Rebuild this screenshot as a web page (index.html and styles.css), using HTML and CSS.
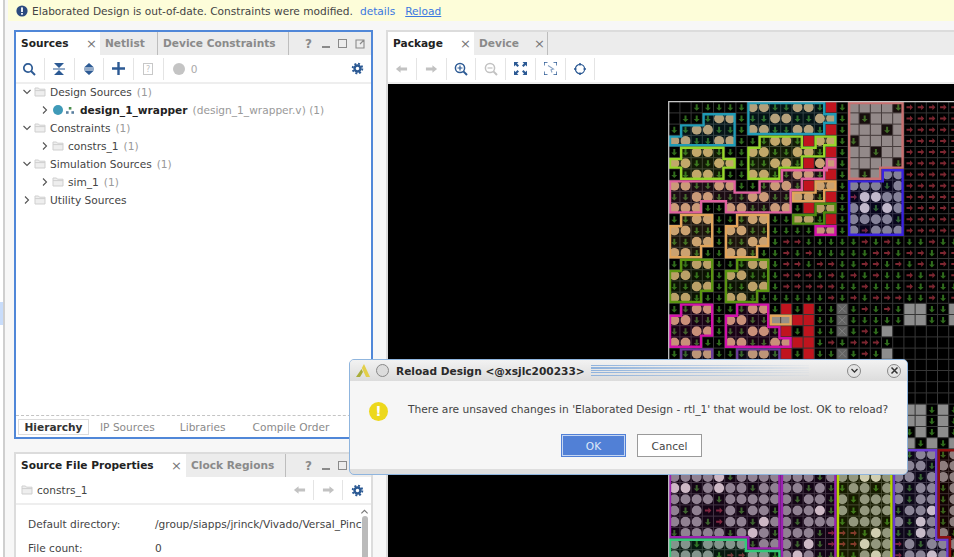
FILE: index.html
```html
<!doctype html>
<html lang="en">
  <head>
    <meta charset="UTF-8" />
    <title>Reload Design</title>
    <link rel="stylesheet" href="styles.css">
  </head>
  <body>
    <svg class="defs" width="0" height="0">
      <symbol id="i-open" viewBox="0 0 10 10"><path d="M1.5 3 5 6.5 8.5 3" fill="none" stroke="#555" stroke-width="1.1"/></symbol>
      <symbol id="i-closed" viewBox="0 0 10 10"><path d="M3 1.5 6.5 5 3 8.5" fill="none" stroke="#555" stroke-width="1.1"/></symbol>
      <symbol id="i-folder" viewBox="0 0 12 10"><path d="M1 1h3.5l1 1.2H11V9H1z" fill="#eeeeee" stroke="#cfcfcf"/><path d="M1 3.600h10" stroke="#cfcfcf"/></symbol>
      <symbol id="i-gear" viewBox="0 0 14 14"><circle cx="7" cy="7" r="3.2" fill="none" stroke="#2c5a94" stroke-width="2.6"/><circle cx="7" cy="7" r="5.2" fill="none" stroke="#2c5a94" stroke-width="2" stroke-dasharray="2.1 1.98"/></symbol>
      <symbol id="i-back" viewBox="0 0 14 10"><path d="M1 5 6 1v2.4h7v3.2H6V9z" fill="#c2c2c2"/></symbol>
      <symbol id="i-fwd" viewBox="0 0 14 10"><path d="M13 5 8 1v2.4H1v3.2h7V9z" fill="#c2c2c2"/></symbol>
    </svg>

    <div class="edge"><div class="edge-mark"></div></div>
    <div class="banner">
      <svg class="banner-icon" width="12" height="12" viewBox="0 0 12 12"><circle cx="6" cy="6" r="5.6" fill="#2c4a80"/><rect x="5.1" y="2.4" width="1.8" height="4.6" fill="#fff"/><rect x="5.1" y="8" width="1.8" height="1.7" fill="#fff"/></svg>
      <span>Elaborated Design is out-of-date. Constraints were modified.</span>
      <a class="banner-link">details</a>
      <a class="banner-link underline">Reload</a>
    </div>

    <div class="workspace">
      <div class="left-col">
        <section class="panel panel-focus sources">
          <div class="tabs">
            <div class="tab active tab-sources"><b>Sources</b><i>×</i></div>
            <div class="tab tab-netlist"><b>Netlist</b></div>
            <div class="tab tab-device"><b>Device Constraints</b></div>
            <div class="win-btns">
              <span class="win-q">?</span><span class="win-min"></span><span class="win-max"></span>
              <svg width="10" height="10" viewBox="0 0 10 10"><path d="M6 1H1v8h8V4M5 5l4-4M6 1h3v3" fill="none" stroke="#8a8a8a" stroke-width="1.1"/></svg>
            </div>
          </div>
          <div class="toolbar">
            <div class="tool"><svg width="14" height="14" viewBox="0 0 14 14"><circle cx="6" cy="6" r="4.2" fill="none" stroke="#2c5a94" stroke-width="1.7"/><path d="M9 9l4 4" stroke="#2c5a94" stroke-width="2"/></svg></div>
            <div class="tool"><svg width="12" height="14" viewBox="0 0 12 14"><path d="M1 1h10L6 6zM1 13h10L6 8z" fill="#2c5a94"/><path d="M0 7h12" stroke="#2c5a94"/></svg></div>
            <div class="tool"><svg width="12" height="14" viewBox="0 0 12 14"><path d="M6 1l5 4.6H1zM6 13l5-4.6H1z" fill="#2c5a94"/><path d="M1 7h10" stroke="#2c5a94"/></svg></div>
            <div class="tool"><svg width="13" height="13" viewBox="0 0 13 13"><path d="M6.5 0v13M0 6.5h13" stroke="#2c5a94" stroke-width="2.4"/></svg></div>
            <div class="tool"><svg width="10" height="12" viewBox="0 0 10 12"><rect x=".5" y=".5" width="9" height="11" fill="none" stroke="#c8c8c8"/><text x="5" y="9" class="doc-q">?</text></svg></div>
            <div class="tool tool-status"><span class="dot"></span><span class="count">0</span></div>
            <svg class="gear" width="13" height="13"><use href="#i-gear"/></svg>
          </div>
          <div class="tree">
            <div class="row"><svg class="chev"><use href="#i-open"/></svg><svg class="folder"><use href="#i-folder"/></svg><span>Design Sources</span><em>(1)</em></div>
            <div class="row sub"><svg class="chev"><use href="#i-closed"/></svg><span class="module-dot"></span><svg class="hier" width="8" height="7" viewBox="0 0 8 7"><rect x="2.8" y="0" width="2.6" height="2.6" fill="#4b8f4f"/><rect x="0" y="4.2" width="2.6" height="2.6" fill="#5a7fa0"/><rect x="5.4" y="4.2" width="2.6" height="2.6" fill="#5a7fa0"/></svg><strong>design_1_wrapper</strong><em>(design_1_wrapper.v) (1)</em></div>
            <div class="row"><svg class="chev"><use href="#i-open"/></svg><svg class="folder"><use href="#i-folder"/></svg><span>Constraints</span><em>(1)</em></div>
            <div class="row sub"><svg class="chev"><use href="#i-closed"/></svg><svg class="folder"><use href="#i-folder"/></svg><span>constrs_1</span><em>(1)</em></div>
            <div class="row"><svg class="chev"><use href="#i-open"/></svg><svg class="folder"><use href="#i-folder"/></svg><span>Simulation Sources</span><em>(1)</em></div>
            <div class="row sub"><svg class="chev"><use href="#i-closed"/></svg><svg class="folder"><use href="#i-folder"/></svg><span>sim_1</span><em>(1)</em></div>
            <div class="row"><svg class="chev"><use href="#i-closed"/></svg><svg class="folder"><use href="#i-folder"/></svg><span>Utility Sources</span></div>
          </div>
          <div class="subtabs">
            <span class="subtab on">Hierarchy</span>
            <span class="subtab">IP Sources</span>
            <span class="subtab">Libraries</span>
            <span class="subtab">Compile Order</span>
          </div>
        </section>

        <section class="panel props">
          <div class="tabs">
            <div class="tab active tab-props"><b>Source File Properties</b><i>×</i></div>
            <div class="tab tab-clock"><b>Clock Regions</b></div>
            <div class="win-btns">
              <span class="win-q">?</span><span class="win-min"></span><span class="win-max"></span>
            </div>
          </div>
          <div class="toolbar props-bar">
            <svg class="folder"><use href="#i-folder"/></svg>
            <span class="props-name">constrs_1</span>
            <div class="nav"><svg width="13" height="10"><use href="#i-back"/></svg></div>
            <div class="nav"><svg width="13" height="10"><use href="#i-fwd"/></svg></div>
            <svg class="gear" width="13" height="13"><use href="#i-gear"/></svg>
          </div>
          <div class="props-body">
            <div class="props-grid">
              <span>Default directory:</span><span class="dir">/group/siapps/jrinck/Vivado/Versal_Pinc</span>
              <span>File count:</span><span>0</span>
            </div>
            <div class="scroll"><svg width="9" height="6" viewBox="0 0 9 6"><path d="M1 5l3.5-3.5L8 5" fill="none" stroke="#777" stroke-width="1.2"/></svg><div class="thumb"></div></div>
          </div>
        </section>
      </div>

      <section class="panel package">
        <div class="tabs">
          <div class="tab active tab-package"><b>Package</b><i>×</i></div>
          <div class="tab tab-devicev"><b>Device</b><i>×</i></div>
        </div>
        <div class="toolbar pkg-bar">
          <div class="tool"><svg width="13" height="10"><use href="#i-back"/></svg></div>
          <div class="tool"><svg width="13" height="10"><use href="#i-fwd"/></svg></div>
          <div class="tool"><svg width="14" height="14" viewBox="0 0 14 14"><circle cx="6" cy="6" r="4.6" fill="none" stroke="#2c5a94" stroke-width="1.5"/><path d="M9.4 9.4 13 13" stroke="#2c5a94" stroke-width="2"/><path d="M3.5 6h5M6 3.5v5" stroke="#2c5a94" stroke-width="1.2"/></svg></div>
          <div class="tool"><svg width="14" height="14" viewBox="0 0 14 14"><circle cx="6" cy="6" r="4.6" fill="none" stroke="#c2c2c2" stroke-width="1.5"/><path d="M9.4 9.4 13 13" stroke="#c2c2c2" stroke-width="2"/><path d="M3.5 6h5" stroke="#c2c2c2" stroke-width="1.2"/></svg></div>
          <div class="tool"><svg width="13" height="13" viewBox="0 0 13 13"><path d="M0 0h4.5L3 1.5 5 3.500 3.500 5l-2-2L0 4.500zM13 0v4.500L11.500 3l-2 2L8 3.500l2-2L8.500 0zM0 13V8.500L1.500 10l2-2L5 9.500l-2 2L4.500 13zM13 13H8.500l1.500-1.500-2-2L9.500 8l2 2L13 8.500z" fill="#2c5a94"/></svg></div>
          <div class="tool"><svg width="13" height="13" viewBox="0 0 13 13"><path d="M0 3.500V0h3.500M9.500 0H13v3.500M13 9.500V13H9.500M3.500 13H0V9.500" fill="none" stroke="#2c5a94" stroke-width="1.4"/><path d="M4 3.500 9.500 7 7 7.800 8 10.500" fill="none" stroke="#8aa3c4" stroke-width="1.1"/></svg></div>
          <div class="tool"><svg width="12" height="12" viewBox="0 0 12 12"><circle cx="6" cy="6" r="4.600" fill="none" stroke="#2c5a94" stroke-width="1.2"/><path d="M6 0v2.500M6 9.500V12M0 6h2.500M9.500 6H12" stroke="#2c5a94" stroke-width="1.500"/></svg></div>
        </div>
        <div class="device-view"><svg id="pkg" width="290" height="470"></svg></div>
      </section>
    </div>

    <div class="dialog">
      <div class="dialog-title">
        <svg width="14" height="13" viewBox="0 0 14 13"><path d="M0 13 5.500 5 7 8 4 13z" fill="#a8ad3a"/><path d="M5.800 4 8 0l6 13H10z" fill="#e3cf4a"/></svg>
        <span class="title-pin"></span>
        <b>Reload Design &lt;@xsjlc200233&gt;</b>
        <span class="title-lines"></span>
        <span class="title-btn"><svg width="9" height="9" viewBox="0 0 9 9"><path d="M1.500 3 4.500 6 7.500 3" fill="none" stroke="#333" stroke-width="1.300"/></svg></span>
        <span class="title-btn"><svg width="9" height="9" viewBox="0 0 9 9"><path d="M1.500 1.500l6 6M7.500 1.500l-6 6" fill="none" stroke="#333" stroke-width="1.500"/></svg></span>
      </div>
      <div class="dialog-body">
        <div class="dialog-msg">
          <span class="warn">!</span>
          <span>There are unsaved changes in 'Elaborated Design - rtl_1' that would be lost. OK to reload?</span>
        </div>
        <div class="dialog-btns">
          <button class="btn btn-ok">OK</button>
          <button class="btn">Cancel</button>
        </div>
      </div>
    </div>

    <script src="grid.js"></script>
  </body>
</html>
```

FILE: styles.css
```css
* {
  box-sizing: border-box;
}

body {
  margin: 0;
  width: 954px;
  height: 557px;
  overflow: hidden;
  position: relative;
  background-color: #f7f7f7;
  font-family: "DejaVu Sans", sans-serif;
  font-size: 10.6px;
  color: #444;
}

.defs {
  position: absolute;
}

/* Left window edge */
.edge {
  position: absolute;
  left: 0;
  top: 0;
  bottom: 0;
  width: 5px;
  background-color: #fff;
  border-right: 2px solid #cfcfcf;
}

.edge-mark {
  height: 23px;
  margin-top: 302px;
  background-color: #c8dcfa;
}

.banner {
  height: 21px;
  margin-left: 8px;
  padding-left: 8px;
  display: flex;
  align-items: center;
  gap: 7px;
  background-color: #fdfdd9;
  white-space: nowrap;
}

.banner-icon {
  margin-right: -3px;
}

.banner-link {
  color: #3b78e0;
}

.underline {
  margin-left: 3px;
  text-decoration: underline;
}

.workspace {
  display: flex;
  gap: 13px;
  padding: 9px 0 0 14px;
}

.left-col {
  width: 359px;
  display: flex;
  flex-direction: column;
  gap: 13px;
}

.panel {
  background-color: #fff;
  border: 2px solid #dcdcdc;
  display: flex;
  flex-direction: column;
}

.panel-focus {
  border: 2px solid #5087d8;
}

.sources {
  height: 409px;
}

.props {
  height: 120px;
}

.package {
  flex: 1;
  height: 540px;
  margin-right: -2px;
}

/* Tab strip */
.tabs {
  height: 23px;
  flex: none;
  display: flex;
  background-color: #ececec;
}

.tab {
  display: flex;
  align-items: center;
  padding: 0 0 1px 5px;
  position: relative;
  border-right: 1px solid #bdbdbd;
}

.tab b {
  color: #8a8a8a;
}

.tab i {
  position: absolute;
  font-style: normal;
  font-size: 13px;
  color: #777;
}

.tab.active {
  background-color: #fff;
  border-right: none;
}

.tab.active b {
  color: #222;
}

.tab-sources {
  width: 84px;
}

.tab-sources i {
  left: 70px;
}

.tab-netlist {
  width: 58px;
}

.tab-device {
  width: 131px;
}

.tab-props {
  width: 170px;
}

.tab-props i {
  left: 155px;
}

.tab-clock {
  width: 100px;
}

.tab-package {
  width: 86px;
}

.tab-package i {
  left: 72px;
}

.tab-devicev {
  width: 74px;
}

.tab-devicev i {
  left: 60px;
}

.win-btns {
  margin-left: auto;
  margin-right: 3px;
  display: grid;
  grid-template-columns: repeat(4, 17px);
  justify-items: center;
  align-items: center;
}

.win-q {
  font-weight: bold;
  font-size: 12px;
  color: #8a8a8a;
}

.win-min {
  width: 8px;
  height: 1.500px;
  margin-top: 7px;
  background-color: #8a8a8a;
}

.win-max {
  width: 9px;
  height: 9px;
  border: 1.500px solid #8a8a8a;
}

/* Toolbars */
.toolbar {
  height: 29px;
  flex: none;
  display: flex;
  align-items: center;
  background-color: #fff;
  border-bottom: 2px solid #eeeeee;
}

.tool {
  width: 29.750px;
  height: 22px;
  display: flex;
  align-items: center;
  justify-content: center;
  border-right: 1px solid #e4e4e4;
}

.tool:first-child {
  margin-left: -1px;
}

.tool-status {
  border: none;
  width: auto;
  padding-left: 9px;
  gap: 6px;
}

.doc-q {
  font-size: 8px;
  fill: #c0c0c0;
  text-anchor: middle;
}

.dot {
  width: 12px;
  height: 12px;
  border-radius: 50%;
  background-color: #c4c4c4;
}

.count {
  color: #aaa;
}

.gear {
  margin-left: auto;
  margin-right: 7px;
}

/* Sources tree */
.tree {
  flex: 1;
  margin-top: -1px;
}

.row {
  height: 18px;
  display: flex;
  align-items: center;
  padding-left: 6px;
  white-space: nowrap;
}

.row.sub {
  padding-left: 24px;
}

.chev {
  width: 10px;
  height: 10px;
  margin-right: 2px;
}

.folder {
  width: 12px;
  height: 10px;
  margin-right: 4px;
  flex: none;
}

.row em {
  font-style: normal;
  color: #999;
  margin-left: 5px;
}

.row strong {
  color: #222;
}

.module-dot {
  width: 10px;
  height: 10px;
  border-radius: 50%;
  background-color: #3f9ab8;
  margin-left: 1px;
}

.hier {
  margin: 0 6px 0 3px;
}

.subtabs {
  height: 22px;
  flex: none;
  display: flex;
  align-items: center;
  padding-left: 2px;
  border-top: 1px dashed #c4c4c4;
  color: #8a8a8a;
}

.subtab {
  padding: 0 4px;
  margin-right: 17px;
}

.subtab:nth-child(3) {
  margin-right: 19px;
}

.subtab.on {
  width: 71px;
  height: 16px;
  line-height: 14px;
  text-align: center;
  font-weight: bold;
  color: #333;
  border: 1px solid #dcdcdc;
  margin-right: 7px;
}

/* Properties */
.props-bar {
  height: 28px;
  padding-left: 5px;
}

.props-name {
  margin-right: auto;
}

.nav {
  width: 29px;
  height: 20px;
  display: flex;
  align-items: center;
  justify-content: center;
  border-right: 1px solid #e4e4e4;
}

.props-bar .gear {
  margin-left: 8px;
}

.props-body {
  display: flex;
  flex: 1;
  overflow: hidden;
}

.props-grid {
  flex: 1;
  min-width: 0;
  display: grid;
  grid-template-columns: 127px 205px;
  grid-auto-rows: 24px;
  align-items: center;
  padding: 7px 0 0 12px;
}

.dir {
  white-space: nowrap;
}

.scroll {
  width: 11px;
  padding-top: 4px;
  margin-right: 1px;
  display: flex;
  flex-direction: column;
  align-items: center;
  gap: 2px;
}

.thumb {
  width: 6px;
  height: 60px;
  border-radius: 3px;
  background-color: #bbb;
}

/* Package view */
.device-view {
  flex: 1;
  overflow: hidden;
  background-color: #000;
  padding: 17px 0 0 280px;
}

#pkg {
  display: block;
}

/* Dialog sits over everything */
.dialog {
  position: absolute;
  left: 349px;
  top: 359px;
  width: 559px;
  height: 116px;
  display: flex;
  flex-direction: column;
  border: 1px solid #8fb5de;
  border-radius: 5px;
  background-color: #dedede;
  padding-bottom: 5px;
  overflow: hidden;
}

.dialog-title {
  height: 21px;
  flex: none;
  display: flex;
  align-items: center;
  padding: 0 6px;
  background: linear-gradient(#f2f2f2, #dcdcdc);
  white-space: nowrap;
}

.dialog-title b {
  color: #2a2a2a;
  margin-left: 7px;
}

.title-pin {
  width: 13px;
  height: 13px;
  margin-left: 6px;
  border-radius: 50%;
  border: 1px solid #888;
  background-color: #dcdcdc;
}

.title-lines {
  flex: 1;
  height: 11px;
  margin: 0 19px 0 6px;
  background: repeating-linear-gradient(#8fb2dc 0 1px, transparent 1px 2.500px);
  -webkit-mask-image: linear-gradient(to right, #000, rgba(0,0,0,0.05));
  mask-image: linear-gradient(to right, #000, rgba(0,0,0,0.05));
}

.title-btn {
  width: 14px;
  height: 14px;
  margin-left: 19px;
  display: flex;
  align-items: center;
  justify-content: center;
  border-radius: 50%;
  border: 1px solid #888;
  background-color: #e4e4e4;
}

.title-btn:last-child {
  margin-left: 26px;
}

.dialog-body {
  flex: 1;
  background-color: #f6f6f6;
  padding: 17px 0 0 19px;
}

.dialog-msg {
  display: flex;
  align-items: center;
  gap: 20px;
  white-space: nowrap;
  font-size: 10.65px;
}

.warn {
  width: 19px;
  height: 19px;
  margin-top: 4px;
  border-radius: 50%;
  background-color: #edd81c;
  color: #fff;
  font-weight: bold;
  font-size: 14px;
  line-height: 19px;
  text-align: center;
}

.dialog-btns {
  display: flex;
  gap: 11px;
  margin: 13px 0 0 192px;
}

.btn {
  width: 65px;
  height: 23px;
  padding: 0;
  background-color: #fff;
  border: 1px solid #9a9a9a;
  font-family: "DejaVu Sans", sans-serif;
  font-size: 10.6px;
  color: #444;
}

.btn-ok {
  background-color: #5180d6;
  color: #dfe8f8;
  border: 1px solid #5180d6;
  box-shadow: inset 0 0 0 1px #c4d5f2;
}
```

FILE: grid.js
```js
// Package view: bank regions and pin sites, drawn on a cell grid
const PITCH = 11.2;
const OFFSET = 0.7;

const HIDDEN = 'ggggggggggggggggggggg';

const ROWS = [
  '..gggggooggoogRgGGGGgrrrrr',
  '.gggoogggooggoogGgGGGrrrrr',
  'ggoogggooggoogRgGGGgGrrrrr',
  'ooggoogggoogRooggGGGGrrrrr',
  'ggoogggooggoogRgGGgGGrrrrr',
  'ooggoogggoogRoogGGGGgrrrrr',
  'ggoogggooggoogRgGgGccrrrrr',
  'ooggoogggoogRoogcccgcrrrrr',
  'ggoogggooggoogRgrwwccrrrrr',
  'oooggooggoogRoogcwgwcrrrrr',
  'ggoogggooggoogRgccccgrrrrr',
  'oogggooggggggoogcrcccrrrrr',
  'ggoogggoogrrgggggrgrgggrgg',
  'oogggoogggrgrgggggrrgrrgrr',
  'ggoogggoogrrgrrggrrgrgrgrr',
  'oogggoogggrrrgrgrgrggrgrgr',
  'ggoogggoogrrrrrggrgggrgrgg',
  'oogggoogggggggrgrgrrrggrgr',
  'ggoogggoogRgRggxgrgrgGGggG',
  'oogggooggGGRRggxgggggGGggG',
  'ggoogggoogRgRggxgrgG......',
  'oogggooggooRRgrgrrrg......',
  'ggoogggoogRgRggxgrgG......',
  HIDDEN + '.....',
  HIDDEN + '.....',
  HIDDEN + '.....',
  HIDDEN + '.....',
  HIDDEN + 'GGgGg',
  HIDDEN + 'GGgGg',
  HIDDEN + 'gGgGg',
  HIDDEN + 'GgGgG',
  HIDDEN + 'gccgc',
  HIDDEN + 'ccgcc',
  'ccccwgcccccccgcccwwcccgccc',
  'wwgcwccgccccgcggccgccgccgc',
  'ccccgccccccgccgcgccccgccgc',
  'cgcrrcgccgcccwgcgcccgccwgc',
  'cccgrccgwccgcccgcccgcgwcgc',
  'gccccgcwcgcccgrrrgwcggwccg',
  'ccgccccgcccgwgrrrwccrcgccc',
  'ccccgrrccgcwcggggcwcrccwcg',
];

// Regions as rectilinear outlines (col, row), clockwise on screen
const REGIONS = [
  ['#1f9ab5', [0,3, 1,3, 1,2, 3,2, 3,1, 6,1, 6,4, 0,4]],
  ['#1f9ab5', [7,0, 14,0, 14,1, 15,1, 15,2, 14,2, 14,3, 7,3]],
  ['#96d62a', [1,4, 5,4, 5,5, 6,5, 6,6, 5,6, 5,7, 1,7, 1,6, 0,6, 0,5, 1,5]],
  ['#96d62a', [7,4, 8,4, 8,3, 12,3, 12,4, 13,4, 13,3, 15,3, 15,4, 14,4, 14,5, 12,5, 12,6, 10,6, 10,7, 7,7]],
  ['#e0609e', [0,7, 6,7, 6,8, 8,8, 8,7, 10,7, 10,6, 14,6, 14,5, 15,5, 15,6, 14,6, 14,7, 12,7, 12,8, 11,8, 11,10, 5,10, 5,9, 3,9, 3,10, 0,10]],
  ['#e2a45a', [11,8, 13,8, 13,7, 15,7, 15,8, 14,8, 14,9, 11,9]],
  ['#4e8a10', [13,9, 15,9, 15,10, 14,10, 14,11, 11,11, 11,10, 13,10]],
  ['#d010a8', [13,11, 15,11, 15,12, 13,12]],
  ['#c87070', [16,0, 21,0, 21,6, 19,6, 19,7, 16,7]],
  ['#3a22e0', [19,6, 21,6, 21,12, 16,12, 16,7, 19,7]],
  ['#e2a45a', [1,10, 4,10, 4,13, 3,13, 3,14, 0,14, 0,11, 1,11]],
  ['#e2a45a', [6,10, 9,10, 9,13, 8,13, 8,14, 5,14, 5,11, 6,11]],
  ['#5a9410', [1,14, 4,14, 4,17, 3,17, 3,18, 0,18, 0,15, 1,15]],
  ['#5a9410', [6,14, 9,14, 9,17, 8,17, 8,18, 5,18, 5,15, 6,15]],
  ['#d010a8', [1,18, 4,18, 4,21, 3,21, 3,22, 0,22, 0,19, 1,19]],
  ['#d010a8', [6,18, 9,18, 9,20, 10,20, 10,21, 11,21, 11,22, 5,22, 5,19, 6,19]],
  ['#e2a45a', [9,19, 11,19, 11,20, 9,20]],
  ['#6a3a9a', [1,22, 4,22, 4,26, 1,26]],
  ['#6a3a9a', [6,22, 10,22, 10,26, 6,26]],
  ['#9a20b0', [0,30, 10,30, 10,40, 7,40, 7,39, 0,39]],
  ['#9a20b0', [10,30, 15,30, 15,46, 10,46]],
  ['#b5d600', [15,30, 20,30, 20,46, 15,46]],
  ['#6a3ad0', [20,31, 24,31, 24,39, 25,39, 25,46, 20,46]],
  ['#8a1010', [24,31, 30,31, 30,50, 25,50, 25,39, 24,39]],
  ['#35c878', [0,39, 7,39, 7,40, 10,40, 10,46, 0,46]],
];

function drawCell(type, x, y) {
  const cx = x + PITCH / 2;
  const cy = y + PITCH / 2;
  const size = PITCH;
  switch (type) {
    case 'g':
      return `<path d="M${cx} ${cy + 3.500}l-3 -3h2v-3.500h2v3.500h2z" fill="#2f6b1c"/>`;
    case 'r':
      return `<path d="M${cx + 3.500} ${cy}l-3 -3v2h-3.500v2h3.500v2z" fill="#7c2630"/>`;
    case 'o':
      return `<circle cx="${cx}" cy="${cy}" r="5" fill="#c9a274"/>`;
    case 'c':
      return `<circle cx="${cx}" cy="${cy}" r="5" fill="#8f8f8f"/>`;
    case 'w':
      return `<circle cx="${cx}" cy="${cy}" r="5" fill="#d4cdc9"/>`;
    case 'R':
      return `<rect x="${x}" y="${y}" width="${size}" height="${size}" fill="#c0141e"/>`;
    case 'G':
      return `<rect x="${x}" y="${y}" width="${size}" height="${size}" fill="#8d8d8d"/>`;
    case 'x':
      return `<rect x="${x}" y="${y}" width="${size}" height="${size}" fill="#636363"/>` +
        `<path d="M${x + 2} ${y + 2}l7 7m0 -7l-7 7" stroke="#808080"/>`;
    default:
      return '';
  }
}

// Move each corner inward so neighbouring outlines sit side by side
function insetOutline(points, d) {
  const verts = [];
  for (let i = 0; i < points.length; i += 2) {
    verts.push([points[i] * PITCH + OFFSET, points[i + 1] * PITCH + OFFSET]);
  }
  return verts.map((v, i) => {
    const prev = verts[(i + verts.length - 1) % verts.length];
    const next = verts[(i + 1) % verts.length];
    const a = [Math.sign(v[0] - prev[0]), Math.sign(v[1] - prev[1])];
    const b = [Math.sign(next[0] - v[0]), Math.sign(next[1] - v[1])];
    const x = v[0] + (-a[1] - b[1]) * d;
    const y = v[1] + (a[0] + b[0]) * d;
    return x.toFixed(2) + ',' + y.toFixed(2);
  }).join(' ');
}

function buildGrid() {
  let cells = '';
  let lines = '';
  ROWS.forEach((row, r) => {
    for (let c = 0; c < row.length; c++) {
      cells += drawCell(row[c], c * PITCH + OFFSET, r * PITCH + OFFSET);
    }
  });
  for (let c = 0; c <= 26; c++) {
    const x = c * PITCH + OFFSET;
    lines += `<path d="M${x} ${OFFSET}V470" stroke="#363636"/>`;
  }
  for (let r = 0; r <= 41; r++) {
    const y = r * PITCH + OFFSET;
    lines += `<path d="M${OFFSET} ${y}H290" stroke="#363636"/>`;
  }
  const fills = REGIONS.map(([color, pts]) =>
    `<polygon points="${insetOutline(pts, 1.3)}" fill="${color}" fill-opacity="0.12" stroke="${color}" stroke-width="2.400"/>`
  ).join('');
  const frame = `<path d="M${OFFSET} 470V${OFFSET}H290" fill="none" stroke="#c8c8c8" stroke-width="1.200"/>`;
  document.getElementById('pkg').innerHTML = cells + lines + fills + frame;
}

buildGrid();
```
